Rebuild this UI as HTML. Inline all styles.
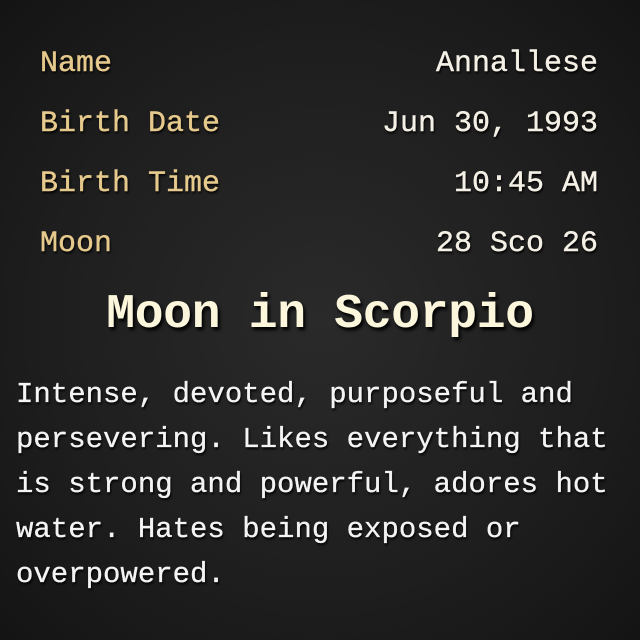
<!DOCTYPE html>
<html><head><meta charset="utf-8"><style>
html,body{margin:0;padding:0}
body{width:640px;height:640px;overflow:hidden;position:relative;
background:radial-gradient(ellipse at center,#2a2a2a 0%,#1e1e1e 60%,#141414 100%);
font-family:"Liberation Mono",monospace;}
.row{position:absolute;left:40px;width:558px;height:40px;font-size:30px;line-height:40px;text-shadow:1px 2px 2px #000;-webkit-text-stroke:0.4px currentColor}
.l{position:absolute;left:0;color:#e6c98c}
.r{position:absolute;right:0;color:#f4f0e6}
.t{position:absolute;left:0;width:640px;top:288px;text-align:center;font-size:48px;font-weight:bold;color:#fbf6dc;text-shadow:2px 3px 3px #000;letter-spacing:-0.3px}
.p{position:absolute;left:16px;top:372px;width:620px;font-size:29px;line-height:45px;color:#f4f4f4;text-shadow:1px 2px 2px #000;white-space:pre;-webkit-text-stroke:0.3px currentColor}
</style></head><body>
<div class="row" style="top:44px"><span class="l">Name</span><span class="r">Annallese</span></div>
<div class="row" style="top:104px"><span class="l">Birth Date</span><span class="r">Jun 30, 1993</span></div>
<div class="row" style="top:164px"><span class="l">Birth Time</span><span class="r">10:45 AM</span></div>
<div class="row" style="top:224px"><span class="l">Moon</span><span class="r">28 Sco 26</span></div>
<div class="t">Moon in Scorpio</div>
<div class="p">Intense, devoted, purposeful and
persevering. Likes everything that
is strong and powerful, adores hot
water. Hates being exposed or
overpowered.</div>
</body></html>
